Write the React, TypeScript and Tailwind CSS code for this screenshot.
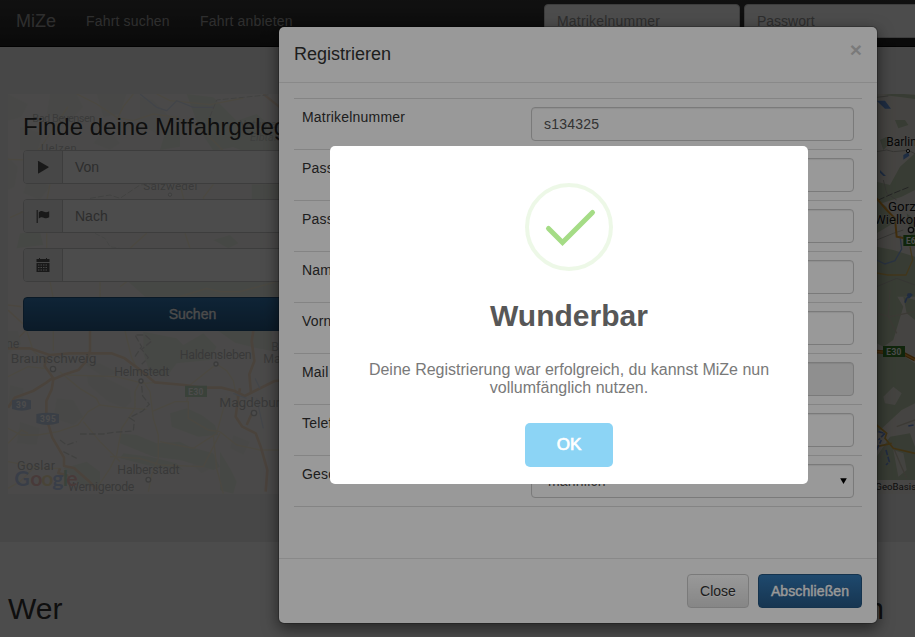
import React from "react";

const labelFont = "font-[Roboto,'Noto_Sans',sans-serif]";

function MapBackground() {
  return (
    <svg className={`absolute inset-0 h-full w-full ${labelFont}`} viewBox="8 94 907 400" preserveAspectRatio="none">
      <rect x="8" y="94" width="907" height="400" fill="#e9e5dc" />
      {/* northern part */}
      <g transform="translate(0 90) scale(.33333)">
        <g fill="#d8d8c6">
          <path d="M24 12l60 30-20 40-40 10zM150 12l80 0 20 40-50 50-60-30zM290 12l90 0-20 60-50 10zM60 110l70 20-20 60-50-10zM420 20l40 10 60 60-40 50-60-40zM24 200l30 30-10 60-20 10zM90 240l60 50-30 40-50-20zM320 110l40 50-30 20-50-20z" />
          <path fill="#c3cfb2" d="M560 12l80 10 70 70 60-20 60 50 10 60-60 20-80-30-60 10-40-60zM755 283h90v60h-90zM500 110l40 20 0 40-60 10z" />
        </g>
        <g fill="none" stroke="#eed385" strokeWidth="4">
          <path d="M24 208l60 2 40-40 40-60 40-60M230 12l60 30 60 40 50 10 60-20 70 10 80 40 60 60M350 90l20-40 30-38M470 12l40 20 120 12 100-20M150 283l-10 50-110 50M540 283l10 40 30 80M640 283l-30 40 20 60" />
          <path stroke="#e6a765" d="M790 12l50 40" strokeWidth="7" />
        </g>
        <path d="M420 12l50 40 30 10 30-30 50 20 60 0" fill="none" stroke="#8ea9dc" strokeWidth="4" />
        <path d="M630 80l20-50 80-8 80-8M270 325l60-10 30 10 60-40 60-5" fill="none" stroke="#8b8b86" strokeWidth="3" strokeDasharray="18 6" />
        <g fill="#333" fontSize="33">
          <text x="97" y="95" textLength="189">Bad Bevensen</text>
          <text x="123" y="187" textLength="107">Uelzen</text>
          <text x="430" y="300" fontSize="35" textLength="162">Salzwedel</text>
          <text x="715" y="114" fill="#5c6c5b" fontStyle="italic">Naturpark</text>
          <text x="750" y="153" fill="#5c6c5b" fontStyle="italic">Elbtalaue</text>
        </g>
        <circle cx="510" cy="314" r="5" fill="#fff" stroke="#555" strokeWidth="3" />
      </g>
      {/* between the search fields */}
      <g transform="translate(0 190) scale(.33333)">
        <path d="M385 275l450 0 0 45-400 0zM640 150l50-15 25 25-30 15zM60 130l60-5 10 40-80 10z" fill="#c3cfb2" />
        <path d="M300 275l0 50M150 275l10 50M360 290l20-15M540 320l80-25 40 10 60 0 110-30M555 130l15 45M140 130l0 45M440 130l-50 45" fill="none" stroke="#eed385" strokeWidth="4" />
        <path d="M24 345l40 5M24 360l60 55-60 60" fill="none" stroke="#edc37e" strokeWidth="5" />
        <path d="M285 130l30 15 15 25 30 5" fill="none" stroke="#aaa" strokeWidth="3" strokeDasharray="16 6" />
      </g>
      {/* Braunschweig – Magdeburg */}
      <g transform="translate(0 325) scale(.33333)">
        <g fill="#d8d8c6">
          <path d="M260 150l40 0 50 25 40 20 5 35-20 20-50-20-60-50zM24 18l30 0 10 40-40 30zM30 180l40 10 0 40-46 20zM170 220l50 5 30 50-30 25-60-20zM60 290l60 20-10 50-60-5zM240 110l60 5 60 30-50 10zM575 420l40-30 20 40-30 15zM700 330l50 20-20 40-40-20z" />
          <path fill="#c3cfb2" d="M430 20l100 20 20 20 60-35 40 40-20 40-100 10-30 40-50-10-20-60zM510 265l50-15 45 20 40 30 10 30-60 5-80-30zM360 325l50 5 60 25 70-5 30 15 70 20 20 40-20 10-100-30-80-10-100-40zM370 385l80 10 80 20 20 20-90-10-100-25zM655 18h160v60l-50-10-60-15zM660 380l30 50 20 40-10 36-40-10zM190 430l70-20 40 30 0 50-60-10z" />
        </g>
        <g fill="none" stroke="#eed385" strokeWidth="4">
          <path d="M24 155l60-30 50 5M80 18l20 60 30 25M160 18l0 60M24 310l40 20 50 0 60-10 60-20 30-40 35-20-10-20-50-30-60-50M200 150l150 5 80 20 40-3M375 18l20 80 25 50M420 170l-15 30 0 50-40 60-15 80-20 40-40 60M430 170l20 30 10 80 15 50 0 70-20 50-10 50M250 290l50 60 60 60M300 240l60 8 80 5M455 260l70-30 40 0 0 50 60 35 35 5M480 350l100 20 70-45 30-110M330 395l90 5 60 20 130 5 50-100M660 320l50 40 70 15 60 0M640 330l10 100 20 76M570 190l-10 40M570 180l50-40 30-23 30 20 20 30 10 50M24 410l100 20 60 0M24 355l40-40 20 10M100 430l-40 40-36 20" />
        </g>
        <g fill="none" stroke="#eb9a4f" strokeWidth="8" strokeLinejoin="round">
          <path d="M24 70l65 0 60 20 60-5 80 0 45 0 40 15 40 30 50 42 90 8 50 8 60 0 40 10 30 15 30-15 60-30 40-3M270 18l0 60-15 35-20 22-40 13-35 15-5 30-16 35 0 50 18 60 35 60 0 25 30 6 45 40 25 25M24 248l20-30 55-20 40-25 20-15-25-35 5-28M715 215l-8 60 20 30 40 20 15 40 20 70-5 65M760 18l-5 30 8 60-15 40 5 55M720 190l-5 25M740 300l20-45" />
          <path d="M180 430l-5 14 30 8" />
        </g>
        <path d="M240 327h70l30-5 60-4 3-30-15-10 40-20 20-20-20-25-5-50M405 95l20-30-20-35 30 0 20 18-30 25 20 25-20 20M180 345l20 15 30-10M190 380l40 20" fill="none" stroke="#7e7e79" strokeWidth="4" strokeDasharray="20 7" />
        <path d="M765 160l15 30M770 220l20 90M700 205l40 15" fill="none" stroke="#9bb4df" strokeWidth="4" />
        <path d="M36 226q30-8 57 0v26q-28 10-57 0z" fill="#3d6cb8" />
        <path d="M109 267q34-8 68 0v27q-34 12-68 0z" fill="#3d6cb8" />
        <rect x="555" y="182" width="66" height="34" fill="#3c8a3b" />
        <g fill="#fff" fontSize="25" fontWeight="700">
          <text x="48" y="249" textLength="31">39</text>
          <text x="120" y="291" textLength="47">395</text>
          <text x="565" y="209" textLength="45">E30</text>
        </g>
        <g fill="#fff" stroke="#444" strokeWidth="4">
          <circle cx="159" cy="132" r="8" />
          <circle cx="423" cy="168" r="6" />
          <circle cx="648" cy="117" r="6" />
          <circle cx="762" cy="264" r="8" />
          <circle cx="445" cy="464" r="7" />
        </g>
        <g fill="#262626" fontSize="37">
          <text x="18" y="70">ne</text>
          <text x="32" y="113" fontSize="41" textLength="257">Braunschweig</text>
          <text x="343" y="153" textLength="165">Helmstedt</text>
          <text x="539" y="103" textLength="216">Haldensleben</text>
          <text x="814" y="78">Burg</text>
          <text x="790" y="114">Magdeb</text>
          <text x="658" y="245" fontSize="41" textLength="205">Magdeburg</text>
          <text x="51" y="436" fontSize="38" textLength="114">Goslar</text>
          <text x="352" y="447" textLength="187">Halberstadt</text>
          <text x="204" y="498" textLength="199">Wernigerode</text>
        </g>
        <g fontFamily="Lato" fontSize="64" fontWeight="700">
          <text x="43" y="484" fill="#2f62cb">G</text>
          <text x="91" y="484" fill="#d5352f">o</text>
          <text x="124" y="484" fill="#dfa61c">o</text>
          <text x="157" y="484" fill="#2f62cb">g</text>
          <text x="188" y="484" fill="#359845">l</text>
          <text x="199" y="484" fill="#d5352f">e</text>
        </g>
      </g>
      {/* eastern edge */}
      <g transform="translate(860 80) scale(.33333)">
        <path d="M70 45l40-5 55 5v12l-45-6zM120 260l45-40v110l-40 20-75 25v-70l40 10zM50 360l30 20 20 50-50 30zM50 500l50 10 65 20v120H50zM140 400l25 20v60l-15-20zM60 180l20-10 10 20-20 20zM105 120l30 0 10 15-30 10z" fill="#bccbae" />
        <path d="M50 52l35-4M50 215l30-5 20 5 45-4 20 10M50 480l50-20 30-10M70 300l10 40 30 20M50 620l60-25 55 20" fill="none" stroke="#b5b3ab" strokeWidth="3" />
        <path d="M55 360l45-20 50-20" fill="none" stroke="#777" strokeWidth="3" strokeDasharray="20 6" />
        <path d="M50 62l25 0 18 24-18 0zM60 270l18 18-8 0-10-10zM130 225l15-8 3 10-18 12zM133 660l18-20 8 4-15 16z" fill="#6796dc" />
        <path d="M50 540l25 12 30-10 20-35-5-40" fill="none" stroke="#8cabdc" strokeWidth="4" />
        <path d="M50 355l30 35 25 25 5 55 20 4" fill="none" stroke="#d8972e" strokeWidth="6" />
        <path d="M150 500l8 40-20 45-55 0-33-6" fill="none" stroke="#dcb75b" strokeWidth="4" />
        <circle cx="144" cy="213" r="5" fill="#fff" stroke="#222" strokeWidth="3" />
        <circle cx="153" cy="450" r="8" fill="#fff" stroke="#222" strokeWidth="4" />
        <rect x="130" y="465" width="50" height="33" fill="#367e28" />
        <text x="138" y="491" fill="#fff" fontSize="25" fontWeight="700">E65</text>
        <g fill="#161616" fontSize="36" stroke="#f4f2ed" strokeWidth="2" paintOrder="stroke">
          <text x="79" y="198" fontSize="36">Barlinek</text>
          <text x="84" y="392" fontSize="40">Gorzów</text>
          <text x="43" y="433" fontSize="39">Wielkopolski</text>
        </g>
      </g>
      <g transform="translate(860 290) scale(.33333)">
        <path d="M50 0h50l30 50-30 100-30 20-20-10zM50 190l85 10 30 20v120l-40 20-75 70zM50 500l40-60 60-10 15 40v100H50zM130 20l35 10v60l-25-20z" fill="#bccbae" />
        <path d="M70 320l30-30 25 20-20 35-30-5zM100 480l30 10 10 50-25 20z" fill="#e3e0d6" />
        <path d="M50 70l40 10 75-15M90 0l-5 80 25 50M110 410l55-20M95 460l25 60 20 45M50 525l30-60" fill="none" stroke="#c8c2b2" strokeWidth="4" />
        <path d="M50 405l30 25-5 15 25 30 65 15M50 470l45-10" fill="none" stroke="#d8a940" strokeWidth="5" />
        <path d="M55 425l20 5-20 20M50 480l14-30M78 480l10 35-10 10M145 408l20-4M135 38l10-26h14" fill="none" stroke="#6f91d9" strokeWidth="5" strokeDasharray="16 5" />
        <path d="M50 185l80 6 35 18" fill="none" stroke="#b37014" strokeWidth="11" />
        <path d="M50 185l80 6 35 18" fill="none" stroke="#efa33e" strokeWidth="4" />
        <rect x="69" y="168" width="66" height="33" fill="#367e28" />
        <text x="79" y="194" fill="#fff" fontSize="25" fontWeight="700" textLength="45">E30</text>
        <rect x="30" y="570" width="135" height="42" fill="#eeece7" />
        <text x="46" y="600" fill="#333" fontSize="29">GeoBasis-DE</text>
      </g>
    </svg>
  );
}

function PlayIcon() {
  return (
    <svg width="14" height="14" viewBox="0 0 14 14" fill="currentColor">
      <path d="M2 1.200v12.100c0 .2.300.3.500.2l10-6c.3-.2.3-.5 0-.7L2.500 1c-.2-.1-.5 0-.5.200z" />
    </svg>
  );
}

function FlagIcon() {
  return (
    <svg width="14" height="14" viewBox="0 0 14 14" fill="currentColor">
      <path d="M.6 1h1.2v13H.6zM2.800 3.200C5 1.300 6.600 2 8 2.700c1.700.8 3 .6 5.200-.5v6C11 9.600 9.300 9.400 7.800 8.700 6.300 8 5 7.700 2.800 9.400z" />
    </svg>
  );
}

function CalendarIcon() {
  return (
    <svg width="14" height="14" viewBox="0 0 14 14" fill="currentColor">
      <path d="M3 0h1v1h6V0h1v1h2.500v3H.5V1H3z" />
      <path fillRule="evenodd" d="M.5 5h13v9H.5zM2 6.500v1h1.500v-1zm2.500 0v1H6v-1zm2.500 0v1h1.500v-1zm2.500 0v1H11v-1zM2 9v1h1.500V9zm2.500 0v1H6V9zM7 9v1h1.500V9zm2.500 0v1H11V9zM2 11.500v1h1.500v-1zm2.500 0v1H6v-1zm2.500 0v1h1.500v-1zm2.500 0v1H11v-1z" />
    </svg>
  );
}

function SearchField({ icon, placeholder }: { icon: React.ReactNode; placeholder: string }) {
  return (
    <div className="mb-[15px] flex h-[34px] overflow-hidden rounded border border-[#ccc] bg-white text-sm text-[#999]">
      <div className="flex w-[39px] shrink-0 items-center justify-center border-r border-[#ccc] bg-[#eee] text-[#555]">{icon}</div>
      <div className="flex items-center px-3">{placeholder}</div>
    </div>
  );
}

function Page() {
  return (
    <div className="flex h-full flex-col bg-white">
      <nav className="flex h-[47px] shrink-0 items-start overflow-hidden border-b border-[#080808] bg-gradient-to-b from-[#3a3a3a] to-[#222] text-[#9d9d9d]">
        <div className="w-[71px] shrink-0 pl-4 pt-2 text-lg leading-[26px]">MiZe</div>
        <div className="w-[114px] shrink-0 pl-[15px] pt-[11px] text-sm leading-5 tracking-[.17px]">Fahrt suchen</div>
        <div className="w-[359px] shrink-0 pl-[15px] pt-[11px] text-sm leading-5 tracking-[.17px]">Fahrt anbieten</div>
        <div className="mr-1 mt-1 flex h-[34px] w-[196px] shrink-0 items-center rounded border border-[#ccc] bg-white px-3 text-sm tracking-[.2px] text-[#999]">Matrikelnummer</div>
        <div className="mt-1 flex h-[34px] w-[196px] shrink-0 items-center rounded border border-[#ccc] bg-white px-3 text-sm text-[#999]">Passwort</div>
      </nav>
      <section className="h-[495px] shrink-0 bg-[#eee] pl-2 pt-[47px]">
        <div className="relative h-[400px]">
          <MapBackground />
          <div className="relative h-full w-[369px] bg-white/70 px-[15px] pt-5">
            <h3 className="mb-[10px] h-[26px] whitespace-nowrap text-2xl leading-[26px] text-[#333]">Finde deine Mitfahrgelegenheit</h3>
            <SearchField icon={<PlayIcon />} placeholder="Von" />
            <SearchField icon={<FlagIcon />} placeholder="Nach" />
            <SearchField icon={<CalendarIcon />} placeholder="" />
            <div className="flex h-[34px] items-center justify-center rounded border border-[#245580] bg-gradient-to-b from-[#337ab7] to-[#265a88] text-sm text-white [-webkit-text-stroke:0.3px_white] [text-shadow:0_-1px_0_rgba(0,0,0,.2)]">Suchen</div>
          </div>
        </div>
      </section>
      <section className="flex justify-between pl-2 pr-[31px] pt-[50px] text-[30px] leading-[33px] text-[#333]">
        <h2>Wer</h2>
        <h2>Wann</h2>
      </section>
    </div>
  );
}

const rows: { label: string; value?: string; kind?: "disabled" | "select" }[] = [
  { label: "Matrikelnummer", value: "s134325" },
  { label: "Passwort" },
  { label: "Passwort wiederholen" },
  { label: "Name" },
  { label: "Vorname" },
  { label: "Mail", kind: "disabled" },
  { label: "Telefon" },
  { label: "Geschlecht", value: "männlich", kind: "select" },
];

function RegisterModal() {
  return (
    <div className="absolute left-[278px] top-[26px] flex h-[598px] w-[600px] flex-col rounded-md border border-black/20 bg-white bg-clip-padding text-sm text-[#333] shadow-[0_5px_15px_rgba(0,0,0,.5)]">
      <header className="flex h-14 shrink-0 justify-between border-b border-[#e5e5e5] px-[15px] pt-[14px]">
        <h4 className="text-lg leading-[26px]">Registrieren</h4>
        <span className="-mt-0.5 text-[21px] font-bold leading-[21px] text-black opacity-20 [text-shadow:0_1px_0_#fff]">×</span>
      </header>
      <div className="grow px-[15px] pt-[15px]">
        <div className="border-b border-[#ddd]">
          {rows.map((r) => (
            <div key={r.label} className="flex h-[51px] border-t border-[#ddd] p-2 tracking-[.2px]">
              <div className="w-[229px] leading-5">{r.label}</div>
              <div className={`flex grow items-center justify-between rounded border border-[#ccc] text-[#555] shadow-[inset_0_1px_1px_rgba(0,0,0,.075)] ${r.kind === "disabled" ? "bg-[#eee]" : "bg-white"} ${r.kind === "select" ? "pl-4 pr-[6px]" : "px-3"}`}>
                <span>{r.value}</span>
                {r.kind === "select" && (
                  <svg width="7" height="6" viewBox="0 0 7 6"><path d="M.2.200h6.600L3.500 6z" fill="#000" /></svg>
                )}
              </div>
            </div>
          ))}
        </div>
      </div>
      <footer className="flex h-[65px] shrink-0 justify-end gap-[9px] border-t border-[#e5e5e5] p-[15px]">
        <div className="flex h-[34px] w-[62px] items-center justify-center rounded border border-[#ccc] bg-gradient-to-b from-white to-[#e0e0e0] [text-shadow:0_1px_0_#fff]">Close</div>
        <div className="flex h-[34px] w-[104px] items-center justify-center rounded border border-[#245580] bg-gradient-to-b from-[#337ab7] to-[#265a88] tracking-[.1px] text-white [-webkit-text-stroke:0.4px_white] [text-shadow:0_-1px_0_rgba(0,0,0,.2)]">Abschließen</div>
      </footer>
    </div>
  );
}

function SuccessAlert() {
  return (
    <div className="absolute left-[330px] top-[146px] flex h-[338px] w-[478px] flex-col items-center rounded-[5px] bg-white pt-[37px] text-center">
      <svg width="88" height="88" viewBox="0 0 88 88" fill="none">
        <circle cx="44" cy="44" r="42" stroke="#a5dc86" strokeOpacity=".2" strokeWidth="4" />
        <path d="M23.500 45.500L37.500 59.500 67.500 29.500" stroke="#a5dc86" strokeWidth="5" strokeLinecap="round" />
      </svg>
      <h2 className="mt-[25px] h-10 text-[30px] font-bold leading-10 text-[#575757]">Wunderbar</h2>
      <p className="mt-[25px] w-[444px] text-base leading-[18px] text-[#797979]">
        Deine Registrierung war erfolgreich, du kannst MiZe nun
        <br />
        vollumfänglich nutzen.
      </p>
      <button className="mt-[26px] h-11 w-[88px] rounded-[5px] bg-[#8cd4f5] text-[17px] text-white [-webkit-text-stroke:0.7px_white]">OK</button>
    </div>
  );
}

export default function App() {
  return (
    <main className="relative h-[637px] w-full overflow-hidden font-['Liberation_Sans',Arial,sans-serif]">
      <Page />
      <div className="absolute inset-0 bg-black/50" />
      <RegisterModal />
      <div className="absolute inset-0 bg-black/40" />
      <SuccessAlert />
    </main>
  );
}
